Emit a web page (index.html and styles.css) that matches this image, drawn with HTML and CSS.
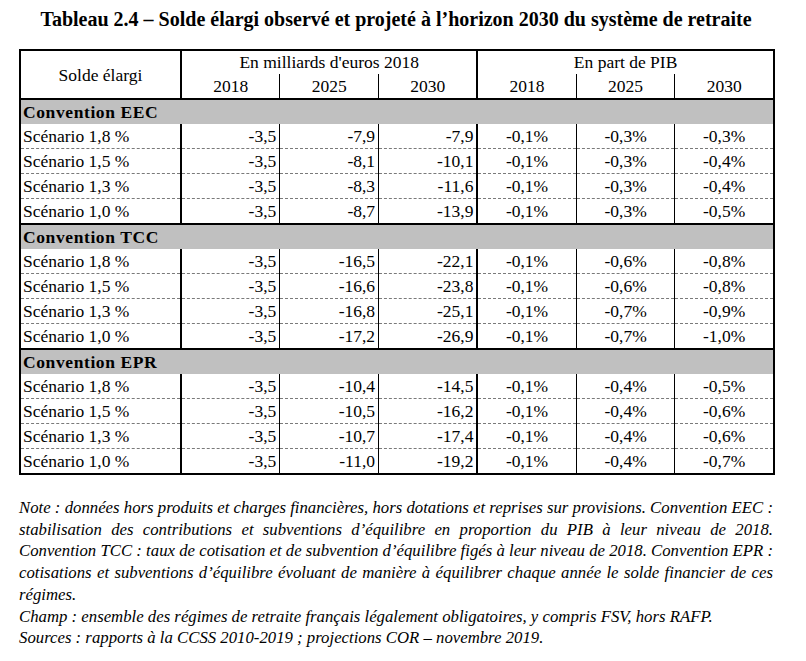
FILE: index.html
```html
<!DOCTYPE html>
<html lang="fr">
<head>
<meta charset="utf-8">
<title>Tableau 2.4</title>
<link rel="stylesheet" href="styles.css">
</head>
<body>
<div class="page">
  <h1 class="title">Tableau 2.4 – Solde élargi observé et projeté à l’horizon 2030 du système de retraite</h1>
  <table class="data">
    <colgroup>
      <col class="c-label"><col class="c-num"><col class="c-num"><col class="c-num"><col class="c-num"><col class="c-num"><col class="c-num">
    </colgroup>
    <thead>
      <tr class="h1">
        <th rowspan="2" class="thick-r">Solde élargi</th>
        <th colspan="3" class="thick-r">En milliards d'euros 2018</th>
        <th colspan="3">En part de PIB</th>
      </tr>
      <tr class="h2">
        <th>2018</th><th>2025</th><th class="thick-r">2030</th>
        <th>2018</th><th>2025</th><th>2030</th>
      </tr>
    </thead>
    <tbody>
      <tr class="sec"><td colspan="7">Convention EEC</td></tr>
      <tr class="row"><td class="lab">Scénario 1,8 %</td><td class="n">-3,5</td><td class="n">-7,9</td><td class="n thick-r">-7,9</td><td class="p">-0,1%</td><td class="p">-0,3%</td><td class="p">-0,3%</td></tr>
      <tr class="row"><td class="lab">Scénario 1,5 %</td><td class="n">-3,5</td><td class="n">-8,1</td><td class="n thick-r">-10,1</td><td class="p">-0,1%</td><td class="p">-0,3%</td><td class="p">-0,4%</td></tr>
      <tr class="row"><td class="lab">Scénario 1,3 %</td><td class="n">-3,5</td><td class="n">-8,3</td><td class="n thick-r">-11,6</td><td class="p">-0,1%</td><td class="p">-0,3%</td><td class="p">-0,4%</td></tr>
      <tr class="row"><td class="lab">Scénario 1,0 %</td><td class="n">-3,5</td><td class="n">-8,7</td><td class="n thick-r">-13,9</td><td class="p">-0,1%</td><td class="p">-0,3%</td><td class="p">-0,5%</td></tr>
      <tr class="sec"><td colspan="7">Convention TCC</td></tr>
      <tr class="row"><td class="lab">Scénario 1,8 %</td><td class="n">-3,5</td><td class="n">-16,5</td><td class="n thick-r">-22,1</td><td class="p">-0,1%</td><td class="p">-0,6%</td><td class="p">-0,8%</td></tr>
      <tr class="row"><td class="lab">Scénario 1,5 %</td><td class="n">-3,5</td><td class="n">-16,6</td><td class="n thick-r">-23,8</td><td class="p">-0,1%</td><td class="p">-0,6%</td><td class="p">-0,8%</td></tr>
      <tr class="row"><td class="lab">Scénario 1,3 %</td><td class="n">-3,5</td><td class="n">-16,8</td><td class="n thick-r">-25,1</td><td class="p">-0,1%</td><td class="p">-0,7%</td><td class="p">-0,9%</td></tr>
      <tr class="row"><td class="lab">Scénario 1,0 %</td><td class="n">-3,5</td><td class="n">-17,2</td><td class="n thick-r">-26,9</td><td class="p">-0,1%</td><td class="p">-0,7%</td><td class="p">-1,0%</td></tr>
      <tr class="sec"><td colspan="7">Convention EPR</td></tr>
      <tr class="row"><td class="lab">Scénario 1,8 %</td><td class="n">-3,5</td><td class="n">-10,4</td><td class="n thick-r">-14,5</td><td class="p">-0,1%</td><td class="p">-0,4%</td><td class="p">-0,5%</td></tr>
      <tr class="row"><td class="lab">Scénario 1,5 %</td><td class="n">-3,5</td><td class="n">-10,5</td><td class="n thick-r">-16,2</td><td class="p">-0,1%</td><td class="p">-0,4%</td><td class="p">-0,6%</td></tr>
      <tr class="row"><td class="lab">Scénario 1,3 %</td><td class="n">-3,5</td><td class="n">-10,7</td><td class="n thick-r">-17,4</td><td class="p">-0,1%</td><td class="p">-0,4%</td><td class="p">-0,6%</td></tr>
      <tr class="row"><td class="lab">Scénario 1,0 %</td><td class="n">-3,5</td><td class="n">-11,0</td><td class="n thick-r">-19,2</td><td class="p">-0,1%</td><td class="p">-0,4%</td><td class="p">-0,7%</td></tr>
    </tbody>
  </table>
  <div class="notes">
    <p class="note">
      <span class="jl">Note : données hors produits et charges financières, hors dotations et reprises sur provisions. Convention EEC :</span>
      <span class="jl">stabilisation des contributions et subventions d’équilibre en proportion du PIB à leur niveau de 2018.</span>
      <span class="jl">Convention TCC : taux de cotisation et de subvention d’équilibre figés à leur niveau de 2018. Convention EPR :</span>
      <span class="jl">cotisations et subventions d’équilibre évoluant de manière à équilibrer chaque année le solde financier de ces</span>
      <span class="ll">régimes.</span>
    </p>
    <p class="note">Champ : ensemble des régimes de retraite français légalement obligatoires, y compris FSV, hors RAFP.</p>
    <p class="note">Sources : rapports à la CCSS 2010-2019 ; projections COR – novembre 2019.</p>
  </div>
</div>
</body>
</html>
```
FILE: styles.css
```css
html, body {
  margin: 0;
  padding: 0;
  background: #ffffff;
}
body {
  font-family: "Liberation Serif", "Times New Roman", serif;
  color: #000;
}
.page {
  width: 754px;
  margin-left: 19px;
  padding-top: 8px;
}
.title {
  margin: 0 0 18px 0;
  font-size: 20px;
  line-height: 23px;
  font-weight: bold;
  text-align: center;
}
.data {
  border-collapse: collapse;
  table-layout: fixed;
  width: 754px;
  border: 2px solid #000;
  font-size: 17.5px;
}
.c-label { width: 161px; }
.c-num { width: 98.8px; }
.data th {
  font-weight: normal;
  padding: 0;
  text-align: center;
  vertical-align: middle;
}
.h1 th { height: 23px; padding-top: 0; }
.h2 th { height: 24px; border-left: 1px solid #000; border-right: 1px solid #000; border-bottom: 2px solid #000; }
.h1 th[rowspan] { border-bottom: 2px solid #000; padding-top: 2px; }
.data .thick-r { border-right: 2px solid #000; }
.sec td {
  background: #c0c0c0;
  font-weight: bold;
  letter-spacing: 0.6px;
  height: 24px;
  padding: 0 0 0 2px;
  border-top: 2px solid #000;
}
.row td {
  height: 24px;
  padding: 0;
  border-left: 1px solid #000;
  border-right: 1px solid #000;
  border-bottom: 1px dashed #7a7a7a;
  white-space: nowrap;
}
.row td.lab { padding-left: 2px; border-right: 2px solid #000; }
.row td.n { text-align: right; padding-right: 3px; }
.row td.p { text-align: center; }
.row td.thick-r { border-right: 2px solid #000; }
.notes {
  margin-top: 22px;
  font-style: italic;
  font-size: 16.75px;
  line-height: 21.7px;
}
.note {
  margin: 0;
}
.jl {
  display: block;
  text-align: justify;
  text-align-last: justify;
}
.ll {
  display: block;
}
```
